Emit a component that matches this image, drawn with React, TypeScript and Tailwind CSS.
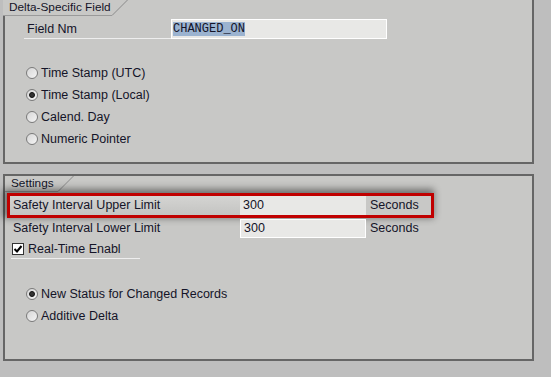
import React from 'react';

const Radio = ({ checked, label }: { checked?: boolean; label: string }) => (
    <div className="flex items-center h-[22px]">
        <span className="w-[12px] h-[12px] rounded-full border border-[#7a7a7a] bg-[linear-gradient(135deg,#d6d6d6,#f4f4f4)] flex items-center justify-center">
            {checked && <span className="w-[6px] h-[6px] rounded-full bg-[#333] border border-[#111]" />}
        </span>
        <span className="ml-[3px]">{label}</span>
    </div>
);

const Tab = ({ label, width }: { label: string; width: number }) => (
    <div className="flex h-[16px] items-end">
        <div className="h-[16px] border-b border-[#9a9a9a] pl-[6px] leading-[14px] text-[11.8px] whitespace-nowrap" style={{ width }}>{label}</div>
        <svg width="16" height="16" className="block">
            <line x1="0" y1="15.5" x2="15.5" y2="0" stroke="#8a8a8a" strokeWidth="1" />
        </svg>
    </div>
);

const App = () => {
    return (
        <div className="w-[551px] h-[377px] bg-[#bebebe] overflow-hidden text-[12.5px] text-[#141428] font-['Liberation_Sans',Arial,sans-serif]">
            {/* Delta-Specific Field */}
            <div className="ml-[3px] w-[531px] h-[164px] bg-[#c8c8c6] border-r-2 border-b-2 border-[#666] flex flex-col">
                <Tab label="Delta-Specific Field" width={109} />
                <div className="flex-1 border-l-2 border-[#666] pl-[19px]">
                    <div className="flex items-end mt-[3px] h-[20px]">
                        <div className="w-[147px] h-[20px] border-b border-[#eeeeee] pl-[3px] leading-[20px]">Field Nm</div>
                        <div className="w-[216px] h-[20px] bg-[#e8e8e6] border border-white flex items-center pl-[1px]">
                            <span className="bg-[#9bb3d0] text-[12px] font-['Liberation_Mono',monospace] leading-[14px]">CHANGED_ON</span>
                        </div>
                    </div>
                    <div className="mt-[23px] pl-[2px]">
                        <Radio label="Time Stamp (UTC)" />
                        <Radio label="Time Stamp (Local)" checked />
                        <Radio label="Calend. Day" />
                        <Radio label="Numeric Pointer" />
                    </div>
                </div>
            </div>

            {/* Settings */}
            <div className="ml-[3px] mt-[10px] w-[531px] h-[187px] bg-[#c8c8c6] border-2 border-[#666] flex flex-col">
                <Tab label="Settings" width={53} />
                <div className="flex-1 pl-[2px]">
                    <div className="mt-[1px] w-[427px] h-[25px] border-[3px] border-[#c00000] flex items-center shadow-[-2px_-2px_7px_2px_rgba(0,0,0,0.45)]">
                        <div className="w-[230px] h-full pl-[3px] leading-[19px] bg-[linear-gradient(#d4d4d2,#c4c4c2)]">Safety Interval Upper Limit</div>
                        <div className="w-[126px] h-full bg-[#e8e8e6] pl-[3px] leading-[19px]">300</div>
                        <div className="pl-[4px] leading-[19px]">Seconds</div>
                    </div>
                    <div className="flex items-center h-[19px] mt-[1px]">
                        <div className="w-[233px] pl-[6px]">Safety Interval Lower Limit</div>
                        <div className="w-[126px] h-[19px] bg-[#e8e8e6] border border-white pl-[3px] leading-[17px]">300</div>
                        <div className="pl-[4px]">Seconds</div>
                    </div>
                    <div className="w-[129px] h-[19px] ml-[4px] mt-[2px] border-b border-[#eeeeee] flex items-center">
                        <span className="w-[12px] h-[12px] ml-[1px] border border-[#333] bg-white flex items-center justify-center">
                            <svg width="10" height="10" viewBox="0 0 10 10">
                                <path d="M1.5 5 L4 7.5 L8.5 2" fill="none" stroke="#000" strokeWidth="2" />
                            </svg>
                        </span>
                        <span className="ml-[4px]">Real-Time Enabl</span>
                    </div>
                    <div className="mt-[24px] pl-[19px]">
                        <Radio label="New Status for Changed Records" checked />
                        <Radio label="Additive Delta" />
                    </div>
                </div>
            </div>
        </div>
    );
};

export default App;
